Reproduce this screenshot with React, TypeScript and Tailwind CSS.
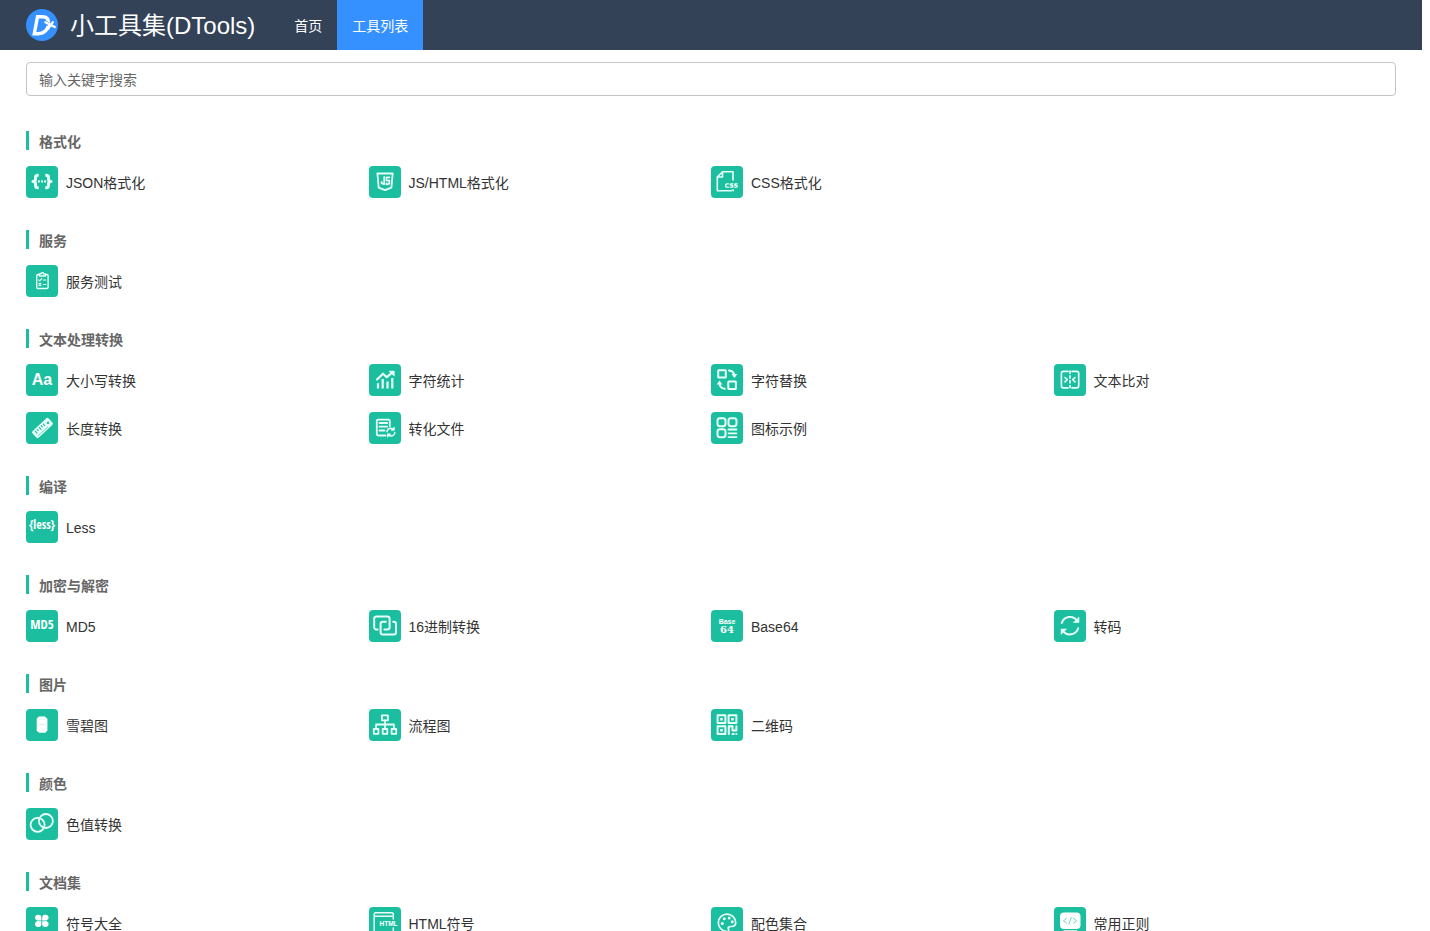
import type { ReactNode } from "react";

type Tool = { name: string; icon: ReactNode };
type Group = { title: string; tools: Tool[] };

function Glyph({ children, width = 1.5 }: { children: ReactNode; width?: number }) {
  return (
    <svg
      viewBox="0 0 32 32"
      className="size-8"
      fill="none"
      stroke="#e9fff9"
      strokeWidth={width}
      strokeLinecap="round"
      strokeLinejoin="round"
      aria-hidden="true"
    >
      {children}
    </svg>
  );
}

const json = (
  <Glyph width={3}>
    <path d="M12.700 9.300h-1a2.200 2.200 0 0 0-2.200 2.200v1.700q0 2.200-2.600 2.300 2.600.1 2.600 2.300v1.700a2.200 2.200 0 0 0 2.200 2.200h1M19.300 9.300h1a2.200 2.200 0 0 1 2.200 2.200v1.700q0 2.200 2.600 2.300-2.600.1-2.600 2.300v1.700a2.200 2.200 0 0 1-2.200 2.200h-1" strokeLinecap="butt" />
    <path d="M12.900 15.500h.01M16 15.500h.01M19.100 15.500h.01" strokeWidth="2.300" />
  </Glyph>
);

const clipboard = (
  <Glyph width={1.4}>
    <path d="M13 9.500h-1a1.300 1.300 0 0 0-1.300 1.300v11.400a1.300 1.300 0 0 0 1.300 1.300h8.800a1.300 1.300 0 0 0 1.300-1.300V10.800a1.300 1.300 0 0 0-1.300-1.300h-1" />
    <path d="M13.300 9h1.500q.1-1.200 1.500-1.200T17.800 9h1.600v2h-6.100z" />
    <path d="m12.700 14.800 1.100 1.100 1.900-2.200M17.300 15h2.500M12.900 18.300l2 2.300M14.900 18.300l-2 2.300M17.300 19.500h2.500" strokeWidth="1.200" />
  </Glyph>
);

const jsShield = (
  <Glyph width={1.8}>
    <path d="M8.400 7.500h15.300l-1.300 14.200-6.400 2.500-6.300-2.500z" />
    <path d="M15.200 10.800v7.400l-2.600-.9v-1.500M20.400 11.300h-2.900v3.200h2.800v3.200l-2.800.8v-1.200" strokeWidth="1.700" />
  </Glyph>
);

const cssFile = (
  <Glyph width={1.6}>
    <path d="M22 14V5.800H11.500L6.300 11v13.700h14M11.500 5.800V11H6.300M22 24.700v-1" />
    <path
      d="M17.600 17.800h-1.700a1.200 1.200 0 0 0-1.200 1.200v.9a1.200 1.200 0 0 0 1.200 1.200h1.700M21.900 17.800h-1.600q-1 0-1 .8t1 .8h.7q1 0 1 .9t-1 .8h-1.700M26.200 17.800h-1.600q-1 0-1 .8t1 .8h.7q1 0 1 .9t-1 .8h-1.700"
      strokeWidth="1.300"
    />
  </Glyph>
);

const chart = (
  <Glyph width={2.2}>
    <path d="m8 15.500 6-5.800 3.800 3.500L24 8" />
    <path d="M20.500 7.200h4.700v4.500z" fill="#e9fff9" strokeWidth=".8" />
    <path d="M9 19.300V24.500M13.700 15V24.500M18.500 17.500V24.500M23.300 14V24.500" strokeLinecap="butt" />
  </Glyph>
);

const swap = (
  <Glyph width={2}>
    <rect x="7.200" y="6.200" width="7.600" height="7.400" rx=".5" />
    <rect x="17.300" y="17.500" width="7.600" height="7.400" rx=".5" />
    <path d="M18 6.500q5.200.5 5.400 5.500M13.800 24.700q-5-.4-5.300-5.500" />
    <path d="M20.500 10.100h5.800l-2.900 4zM5.700 20.600h5.700l-2.900-4z" fill="#e9fff9" stroke="none" />
  </Glyph>
);

const compare = (
  <Glyph width={1.7}>
    <path d="M14 7.300H9.400a2 2 0 0 0-2 2v12.500a2 2 0 0 0 2 2H14M18 7.300h4.700a2 2 0 0 1 2 2v12.500a2 2 0 0 1-2 2H18" />
    <path d="M16 6.500v18.500" strokeDasharray="3.400 1.400" strokeLinecap="butt" />
    <path d="m11 13.500 2.300 2.200-2.300 2.200M21 13.500l-2.300 2.200 2.300 2.200" strokeWidth="1.600" />
  </Glyph>
);

const ruler = (
  <Glyph width={1.5}>
    <g transform="rotate(-43 16.500 16)">
      <rect x="5.500" y="11.500" width="22" height="9" rx="1.800" fill="#e9fff9" stroke="none" />
      <path d="M9 13v3.400M11.700 13v2.400M14.400 13v3.400M17.100 13v2.400M19.800 13v3.400" stroke="#1bbf9f" strokeWidth="1.100" strokeLinecap="butt" />
      <circle cx="24" cy="16" r="1.300" fill="#1bbf9f" stroke="none" />
      <path d="M8 18.800h13" stroke="#1bbf9f" strokeWidth=".6" />
    </g>
  </Glyph>
);

const convertFile = (
  <Glyph width={1.8}>
    <path d="M16.500 23.500H9.200a1.400 1.400 0 0 1-1.400-1.400V9a1.400 1.400 0 0 1 1.400-1.400h10.200A1.400 1.400 0 0 1 20.800 9v5M10.500 11h7.700M10.500 14.700h7.700M10.500 18.500h5" />
    <path d="M18 19.700q.5-3.500 3.900-3.500 1.500 0 2.800 1.400M25.800 20.500q-.5 3.500-3.900 3.500-1.700 0-2.900-1.500M25 15.500v2.500h-2.500M18.700 24.700v-2.500h2.500" strokeWidth="1.500" />
  </Glyph>
);

const grid = (
  <Glyph width={2}>
    <rect x="6.500" y="6.200" width="8" height="8" rx="2.400" />
    <rect x="17.500" y="6.200" width="8" height="8" rx="2.400" />
    <rect x="6.500" y="17.200" width="8" height="8" rx="2.400" />
    <path d="M17.500 17.500h8M17.500 21.300h8M17.500 25.100h8" strokeWidth="1.800" />
  </Glyph>
);

const linked = (
  <Glyph width={2}>
    <path d="M8.700 19.500H7.400a2.200 2.200 0 0 1-2.200-2.200V8.600a2.200 2.200 0 0 1 2.200-2.200h11a2.200 2.200 0 0 1 2.200 2.200v8.700a2.200 2.200 0 0 1-2.200 2.200h-3" />
    <path d="M16.800 11.800h-3a2.200 2.200 0 0 0-2.200 2.200v8.300a2.200 2.200 0 0 0 2.200 2.200h11a2.200 2.200 0 0 0 2.200-2.200V14a2.200 2.200 0 0 0-2.200-2.200h-.6" />
  </Glyph>
);

const refresh = (
  <Glyph width={2}>
    <path d="M7.800 13a8.600 8.600 0 0 1 15.600-1.800M24.200 18.300a8.600 8.600 0 0 1-15.600 1.900" />
    <path d="M25 7.300v5.200h-5.400zM7 24.200V19h5.400z" fill="#e9fff9" strokeWidth=".5" />
  </Glyph>
);

const can = (
  <Glyph width={1}>
    <path d="M13.300 7.800h5.500l2.300 2v11.700l-2 1.900h-6.200l-1.900-1.900V9.800z" fill="#fff" stroke="#fff" strokeWidth=".6" />
    <path d="M13 15.800q2-1 3.500-.2t2.800-.2" stroke="#b5ece1" strokeWidth=".7" />
    <path d="M13.500 10.300h5M13.500 20.800h5" stroke="#d5f5ee" strokeWidth=".6" />
  </Glyph>
);

const tree = (
  <Glyph width={1.8}>
    <rect x="12.900" y="6.300" width="6" height="5" />
    <rect x="4.800" y="20" width="4.600" height="4.800" />
    <rect x="13.700" y="20" width="4.600" height="4.800" />
    <rect x="22.600" y="20" width="4.600" height="4.800" />
    <path d="M16 11.500V20M7.100 20v-4.500h17.800V20" />
  </Glyph>
);

const qr = (
  <Glyph width={2}>
    <rect x="6.600" y="6.300" width="7.800" height="7.700" />
    <rect x="17.600" y="6.300" width="7.800" height="7.700" />
    <rect x="6.600" y="17.300" width="7.800" height="7.700" />
    <path d="M9.200 8.900h2.600v2.500H9.200zM20.200 8.900h2.600v2.500h-2.600zM9.200 19.900h2.600v2.500H9.200z" fill="#e9fff9" stroke="none" />
    <path d="M17.800 25v-7.700h3.700v4.200h3.900v-4.200M21.500 25h1.300M25.300 25h.1" />
  </Glyph>
);

const rings = (
  <Glyph width={1.8}>
    <circle cx="11.600" cy="16.800" r="7" />
    <circle cx="19.900" cy="13" r="7" />
  </Glyph>
);

const clover = (
  <Glyph>
    <g fill="#fff" stroke="none">
      <path d="M12.300 7.700a3 3 0 0 1 3.100 3v2.700h-2.900a2.900 2.900 0 1 1-.2-5.700z" />
      <path d="M19.300 7.700a3 3 0 0 0-3.100 3v2.700h2.900a2.900 2.900 0 1 0 .2-5.700z" />
      <path d="M12.300 19.900a3 3 0 0 0 3.100-3v-2.700h-2.900a2.900 2.900 0 1 0-.2 5.700z" />
      <path d="M19.300 19.900a3 3 0 0 1-3.100-3v-2.700h2.900a2.900 2.900 0 1 1 .2 5.700z" />
    </g>
  </Glyph>
);

const palette = (
  <Glyph width={1.7}>
    <path d="M16 24.500a8.700 8.700 0 1 1 8.700-8.800c0 3.500-2.700 3.800-4.700 3.800-3.200 0-3.200 1.500-2.500 2.700.7 1.300.1 2.300-1.500 2.300z" />
    <g fill="#e9fff9" stroke="none">
      <circle cx="11.300" cy="16.500" r="1.500" />
      <circle cx="13.300" cy="11.800" r="1.500" />
      <circle cx="18.200" cy="11" r="1.500" />
      <circle cx="21.300" cy="14.700" r="1.500" />
    </g>
  </Glyph>
);

const regex = (
  <Glyph width={1}>
    <rect x="6" y="5.500" width="20.500" height="16.500" rx="4" fill="#fff" stroke="none" />
    <path d="m12.700 11.200-3.200 2.500 3.200 2.500M19.500 11.200l3.200 2.500-3.200 2.500M17.300 10.500l-2.400 6.500" stroke="#5fd3bd" strokeWidth=".9" />
    <path d="M10 24h12.500" stroke="#fff" strokeWidth="1.600" />
  </Glyph>
);

const html = (
  <Glyph width={1.5}>
    <path d="M24.300 12V7.200a1.500 1.500 0 0 0-1.500-1.500H6.700a1.500 1.500 0 0 0-1.500 1.500v17.500a1.500 1.500 0 0 0 1.500 1.500h16.100a1.500 1.500 0 0 0 1.500-1.500V21M5.200 9.300h19.100" />
    <text x="10.500" y="19" fontSize="6.500" fontWeight="700" fontFamily="Liberation Sans, sans-serif" fill="#fff" stroke="none">
      HTML
    </text>
  </Glyph>
);

const letters = (
  <span className="font-['Liberation_Sans',sans-serif] text-[16px] leading-8 font-bold text-white">Aa</span>
);

const less = (
  <span className="pb-1 font-['Liberation_Sans_Narrow','Open_Sans_Condensed','Roboto_Condensed','Liberation_Sans',sans-serif] text-[12px] leading-7 font-black text-white">
    {"{less}"}
  </span>
);

const md5 = (
  <span className="pb-1 font-['Liberation_Sans_Narrow','Open_Sans_Condensed','Roboto_Condensed','Liberation_Sans',sans-serif] text-[13px] leading-7 font-black text-white">
    MD5
  </span>
);

const base64 = (
  <span className="flex flex-col items-center pb-px text-white">
    <span className="font-['Liberation_Sans',sans-serif] text-[7px] leading-2 font-bold">Base</span>
    <span className="font-['DejaVu_Serif',serif] text-[10px] leading-2 font-bold">64</span>
  </span>
);

const groups: Group[] = [
  {
    title: "格式化",
    tools: [
      { name: "JSON格式化", icon: json },
      { name: "JS/HTML格式化", icon: jsShield },
      { name: "CSS格式化", icon: cssFile },
    ],
  },
  { title: "服务", tools: [{ name: "服务测试", icon: clipboard }] },
  {
    title: "文本处理转换",
    tools: [
      { name: "大小写转换", icon: letters },
      { name: "字符统计", icon: chart },
      { name: "字符替换", icon: swap },
      { name: "文本比对", icon: compare },
      { name: "长度转换", icon: ruler },
      { name: "转化文件", icon: convertFile },
      { name: "图标示例", icon: grid },
    ],
  },
  { title: "编译", tools: [{ name: "Less", icon: less }] },
  {
    title: "加密与解密",
    tools: [
      { name: "MD5", icon: md5 },
      { name: "16进制转换", icon: linked },
      { name: "Base64", icon: base64 },
      { name: "转码", icon: refresh },
    ],
  },
  {
    title: "图片",
    tools: [
      { name: "雪碧图", icon: can },
      { name: "流程图", icon: tree },
      { name: "二维码", icon: qr },
    ],
  },
  { title: "颜色", tools: [{ name: "色值转换", icon: rings }] },
  {
    title: "文档集",
    tools: [
      { name: "符号大全", icon: clover },
      { name: "HTML符号", icon: html },
      { name: "配色集合", icon: palette },
      { name: "常用正则", icon: regex },
    ],
  },
];

function Logo() {
  return (
    <svg viewBox="0 0 32 32" className="size-8" aria-hidden="true">
      <circle cx="16" cy="16" r="16" fill="#3491ff" />
      <path
        d="M11.500 7.700h5q6 0 6 6 0 5-2.800 8t-7.200 3H8.300z"
        fill="none"
        stroke="#fff"
        strokeWidth="3.400"
      />
      <path d="m18 13 4.500 2.300" stroke="#3491ff" strokeWidth="4" />
      <path d="m19.300 13.200 9.500 4.800" stroke="#fff" strokeWidth="2.200" strokeLinecap="round" />
      <path d="m26.800 13.200-4.800 7" stroke="#fff" strokeWidth="2.200" strokeLinecap="round" />
    </svg>
  );
}

export default function App() {
  return (
    <div className="h-screen overflow-y-auto bg-white pr-2 font-['Liberation_Sans','Noto_Sans_CJK_SC',sans-serif] text-sm text-[#333] [scrollbar-width:none]">
      <header className="flex h-[50px] items-stretch bg-[#334257] pl-[26px] text-white">
        <a href="#home" className="mr-6 flex items-center gap-3">
          <Logo />
          <span className="pt-0.5 text-2xl whitespace-nowrap">小工具集(DTools)</span>
        </a>
        <nav className="flex items-stretch">
          <a href="#home" className="flex items-center px-[15px] pt-0.5">
            首页
          </a>
          <a href="#tools" aria-current="page" className="flex items-center bg-[#3491ff] px-[15px] pt-0.5">
            工具列表
          </a>
        </nav>
      </header>

      <main className="px-[26px] pt-3 pb-8">
        <input
          type="search"
          aria-label="输入关键字搜索"
          placeholder="输入关键字搜索"
          className="block h-[34px] w-full rounded border border-[#c4c4c4] bg-white px-3 pt-0.5 outline-none placeholder:text-[#666]"
        />

        <div className="mt-[35px] flex flex-col gap-8">
          {groups.map((group) => (
            <section key={group.title}>
              <h2 className="mb-4 h-[19px] border-l-3 border-[#1bbf9f] pl-[10px] leading-[23px] font-bold text-[#666]">
                {group.title}
              </h2>
              <ul className="grid grid-cols-4 gap-y-4">
                {group.tools.map((tool) => (
                  <li key={tool.name} className="flex">
                    <a href={`#${tool.name}`} className="flex h-8 items-center gap-2">
                      <span className="flex size-8 shrink-0 items-center justify-center overflow-hidden rounded bg-[#1bbf9f]">
                        {tool.icon}
                      </span>
                      <span className="pt-0.5 leading-5">{tool.name}</span>
                    </a>
                  </li>
                ))}
              </ul>
            </section>
          ))}
        </div>
      </main>
    </div>
  );
}
